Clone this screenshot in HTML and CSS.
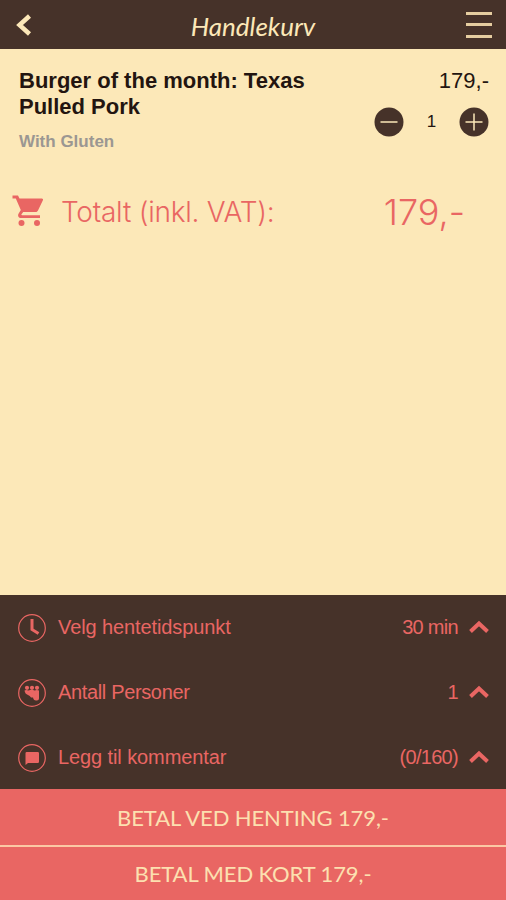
FILE: index.html
```html
<!DOCTYPE html>
<html lang="no">
<head>
    <meta charset="UTF-8">
    <meta name="viewport" content="width=device-width, initial-scale=1.0">
    <title>Handlekurv</title>
    <link rel="stylesheet" href="styles.css">
</head>
<body>
    <header>
        <a href="#" class="back" aria-label="Tilbake">
            <svg width="18" height="24" viewBox="0 0 18 24"><path d="M15.500 3 5.500 12l10 9"/></svg>
        </a>
        <h1>Handlekurv</h1>
        <a href="#" class="menu" aria-label="Meny"><span></span><span></span><span></span></a>
    </header>

    <main>
        <section class="item">
            <div class="item-info">
                <h2>Burger of the month: Texas<br>Pulled Pork</h2>
                <p class="note">With Gluten</p>
            </div>
            <div class="item-side">
                <div class="price">179,-</div>
                <div class="quantity">
                    <svg width="30" height="30" viewBox="0 0 30 30"><circle cx="15" cy="15" r="14.5"/><path d="M6.5 15h17"/></svg>
                    <span>1</span>
                    <svg width="30" height="30" viewBox="0 0 30 30"><circle cx="15" cy="15" r="14.5"/><path d="M6.5 15h17M15 6.5v17"/></svg>
                </div>
            </div>
        </section>

        <section class="total">
            <svg class="cart" width="32" height="32" viewBox="0 0 32 32">
                <path d="M.5.5H6l1.500 3h22.300c1 0 1.500.8 1.100 1.700L26 15.500c-.4.900-1.200 1.500-2.300 1.500H11.200l-1.700 2.300c-.3.500 0 .9.500.9h18V23H9c-2.300 0-3.600-2.300-2.500-4.300L8.800 15 3.800 3.500H.5z"/>
                <circle cx="9.500" cy="28" r="3"/>
                <circle cx="25" cy="28" r="3"/>
            </svg>
            <span class="total-label">Totalt (inkl. VAT):</span>
            <span class="total-price">179,-</span>
        </section>
    </main>

    <section class="options">
        <div class="option">
            <svg class="icon" width="28" height="28" viewBox="0 0 28 28">
                <circle cx="14" cy="14" r="13.300"/>
                <path class="hands" d="M14 5v10.500l6.500 4"/>
            </svg>
            <span class="name">Velg hentetidspunkt</span>
            <span class="value">30 min</span>
            <svg class="arrow" width="20" height="14" viewBox="0 0 20 14"><path d="m1.500 11.500 8.500-8 8.500 8"/></svg>
        </div>
        <div class="option">
            <svg class="icon" width="28" height="28" viewBox="0 0 28 28">
                <circle cx="14" cy="14" r="13.300"/>
                <g class="solid">
                    <circle cx="9" cy="8.800" r="2.100"/>
                    <circle cx="14" cy="8.800" r="2.100"/>
                    <circle cx="19" cy="8.800" r="2.100"/>
                    <path d="M6.500 11.500q1.500-1 4 0 3.500-1.500 6 0 2.500-1 4.500 0v8q0 2-2 2h-1q-2.500 0-3-3h-2q-1-2-3-2.500-3-1-3.500-4.500z"/>
                </g>
            </svg>
            <span class="name name-people">Antall Personer</span>
            <span class="value">1</span>
            <svg class="arrow" width="20" height="14" viewBox="0 0 20 14"><path d="m1.500 11.500 8.500-8 8.500 8"/></svg>
        </div>
        <div class="option">
            <svg class="icon" width="28" height="28" viewBox="0 0 28 28">
                <circle cx="14" cy="14" r="13.300"/>
                <path class="solid" d="M8.700 8h11.100q1.200 0 1.200 1.200v8.600q0 1.200-1.200 1.200H10L7.500 21V9.200Q7.500 8 8.700 8z"/>
            </svg>
            <span class="name">Legg til kommentar</span>
            <span class="value">(0/160)</span>
            <svg class="arrow" width="20" height="14" viewBox="0 0 20 14"><path d="m1.500 11.500 8.500-8 8.500 8"/></svg>
        </div>
    </section>

    <footer>
        <a href="#" class="pay pay-pickup"><span>BETAL VED HENTING 179,-</span></a>
        <a href="#" class="pay pay-card"><span>BETAL MED KORT 179,-</span></a>
    </footer>
</body>
</html>
```
FILE: styles.css
```css
* {
    box-sizing: border-box;
}
body {
    margin: 0;
    height: 900px;
    display: flex;
    flex-direction: column;
    font-family: "Liberation Sans", Arial, sans-serif;
    background-color: #fce8b8;
    color: #231510;
    overflow: hidden;
}
h1, h2, p {
    margin: 0;
}
a {
    color: inherit;
    text-decoration: none;
}
svg {
    display: block;
    flex: none;
}
header {
    height: 49px;
    padding: 0 14px 0 14px;
    display: flex;
    align-items: center;
    justify-content: space-between;
    background-color: #463229;
    color: #fce8b8;
}
.back {
    width: 26px;
}
.back path {
    fill: none;
    stroke: #fce8b8;
    stroke-width: 4.5;
}
h1 {
    font-family: Lato, sans-serif;
    font-size: 26px;
    font-style: italic;
    font-weight: 400;
    line-height: 49px;
    padding-top: 3px;
}
.menu {
    width: 26px;
    height: 26px;
    display: flex;
    flex-direction: column;
    justify-content: space-between;
}
.menu span {
    height: 3px;
    background-color: #e5cda0;
}
main {
    flex: 1;
}
.item {
    display: flex;
    justify-content: space-between;
    padding: 19px 17px 0 19px;
}
h2 {
    font-size: 22px;
    font-weight: 700;
    line-height: 26px;
    white-space: nowrap;
}
.note {
    margin-top: 12px;
    font-size: 17px;
    font-weight: 700;
    line-height: 20px;
    color: #9b9792;
}
.item-side {
    width: 115px;
}
.price {
    font-size: 22px;
    line-height: 26px;
    text-align: right;
}
.quantity {
    display: flex;
    align-items: center;
    justify-content: space-between;
    margin-top: 13px;
    font-size: 17px;
}
.quantity circle {
    fill: #463229;
}
.quantity path {
    stroke: #fce8b8;
    stroke-width: 1.5;
}
.total {
    display: flex;
    align-items: center;
    margin-top: 37px;
    padding: 0 41px 0 12px;
    color: #e96663;
}
.cart {
    fill: #e96663;
    margin-right: 17px;
}
.total-label {
    font-family: Inter, sans-serif;
    font-size: 28px;
    font-weight: 300;
    line-height: 40px;
    letter-spacing: -0.25px;
    padding-top: 2px;
}
.total-price {
    margin-left: auto;
    font-family: Inter, sans-serif;
    font-size: 36px;
    font-weight: 300;
    line-height: 40px;
    padding-top: 3px;
}
.options {
    height: 194px;
    padding: 0 17px 0 18px;
    background-color: #463229;
    color: #e96663;
}
.option {
    height: 65px;
    display: flex;
    align-items: center;
    font-size: 20px;
}
.icon {
    margin-right: 12px;
}
.icon circle {
    fill: none;
    stroke: #e96663;
    stroke-width: 1.2;
}
.icon .hands {
    fill: none;
    stroke: #e96663;
    stroke-width: 3;
}
.icon .solid, .icon .solid circle {
    fill: #e96663;
    stroke: none;
}
.name {
    letter-spacing: -0.1px;
}
.name-people {
    letter-spacing: -0.35px;
}
.value {
    margin-left: auto;
    margin-right: 11px;
    letter-spacing: -0.7px;
}
.arrow {
    margin-bottom: 2px;
}
.arrow path {
    fill: none;
    stroke: #e96663;
    stroke-width: 4;
}
.pay {
    height: 56px;
    display: flex;
    align-items: center;
    justify-content: center;
    background-color: #e96663;
    color: #fce0b0;
    font-family: Lato, sans-serif;
    font-size: 22px;
    letter-spacing: -0.1px;
}
.pay-card {
    height: 55px;
    border-top: 2px solid #fbc8a4;
}
```
